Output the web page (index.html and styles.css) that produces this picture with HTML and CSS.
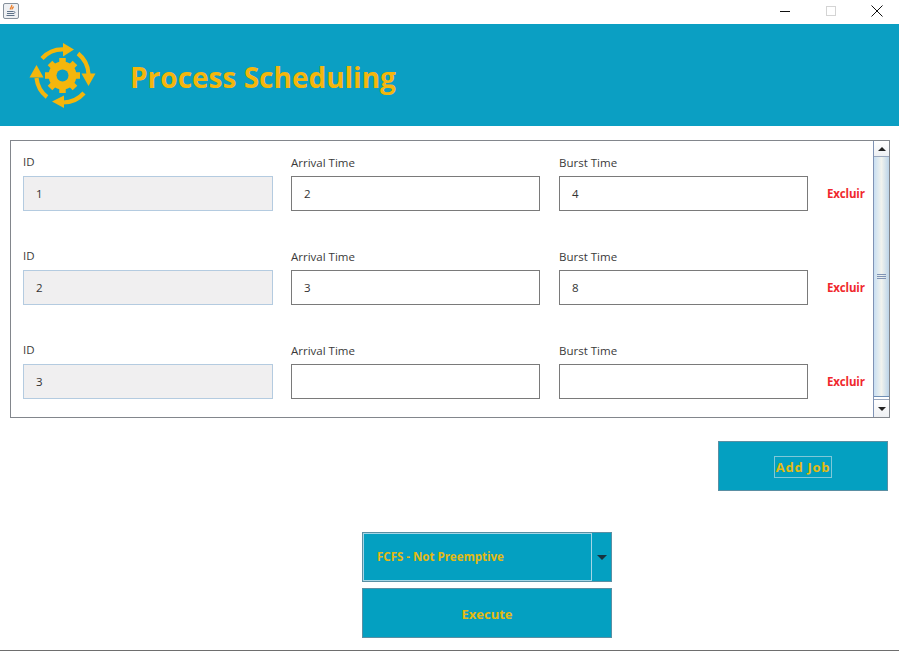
FILE: index.html
```html
<!DOCTYPE html>
<html lang="en">
<head>
  <meta charset="UTF-8" />
  <title>Process Scheduling</title>
  <link rel="stylesheet" href="styles.css">
</head>
<body>
  <div class="titlebar">
    <svg class="app-icon" width="16" height="16" viewBox="0 0 16 16">
      <rect x="0.5" y="0.5" width="15" height="15" rx="1.5" fill="#eef0f3" stroke="#87919c"/>
      <path d="M8.500 2c1.500 1.500-2 2.500-1 4.500M10.200 3.500c.5 1-1.500 1.500-1 3" fill="none" stroke="#ec7f2c" stroke-width="1.400"/>
      <path d="M4 8.500h6.500M4 10.500h7M3.500 12.500h8" fill="none" stroke="#5d7188" stroke-width="1"/>
      <path d="M10.500 8.500c2 0 2 1.500 .2 2" fill="none" stroke="#5d7188" stroke-width="0.800"/>
    </svg>
    <div class="window-btns">
      <svg width="12" height="12" viewBox="0 0 12 12"><path d="M1 6.500h10" stroke="#111" stroke-width="1"/></svg>
      <svg width="12" height="12" viewBox="0 0 12 12"><rect x="1.500" y="1.500" width="9" height="9" fill="none" stroke="#d4d4d4"/></svg>
      <svg width="12" height="12" viewBox="0 0 12 12"><path d="M.5 .5l11 11M11.500 .5l-11 11" stroke="#111" stroke-width="1"/></svg>
    </div>
  </div>

  <div class="header">
    <svg class="logo" width="85" height="80" viewBox="0 0 85 80">
      <g fill="none" stroke="#f4b60c" stroke-width="4.200">
        <path d="M22 23.500A28 28 0 0 1 44 14.500"/>
        <path d="M58 18.500A28 28 0 0 1 68.500 39"/>
        <path d="M64 58A28 28 0 0 1 43 67.500"/>
        <path d="M27 62A28 28 0 0 1 16.500 43"/>
      </g>
      <g fill="#f4b60c">
        <path d="M43 8L54 14.500L43 21.500Z"/>
        <path d="M61.500 38.500H75.500L68.500 51Z"/>
        <path d="M44 60.500V73L32 66.500Z"/>
        <path d="M9.500 42.500H23.500L16.500 30Z"/>
      </g>
      <circle cx="42.500" cy="40.500" r="10" fill="none" stroke="#f4b60c" stroke-width="8"/>
      <g stroke="#f4b60c" stroke-width="6.500">
        <path d="M42.500 23v35M25 40.500h35M30 28l25 25M55 28l-25 25"/>
      </g>
      <circle cx="42.500" cy="40.500" r="6" fill="#0b9fc3"/>
    </svg>
    <h1 class="title">Process Scheduling</h1>
  </div>

  <div class="main">
    <div class="job-panel">
      <div class="job-list">
        <div class="job-row">
          <div class="field"><label class="id-label">ID</label><div class="input readonly">1</div></div>
          <div class="field"><label>Arrival Time</label><div class="input">2</div></div>
          <div class="field"><label>Burst Time</label><div class="input">4</div></div>
          <div class="delete">Excluir</div>
        </div>
        <div class="job-row">
          <div class="field"><label class="id-label">ID</label><div class="input readonly">2</div></div>
          <div class="field"><label>Arrival Time</label><div class="input">3</div></div>
          <div class="field"><label>Burst Time</label><div class="input">8</div></div>
          <div class="delete">Excluir</div>
        </div>
        <div class="job-row">
          <div class="field"><label class="id-label">ID</label><div class="input readonly">3</div></div>
          <div class="field"><label>Arrival Time</label><div class="input"></div></div>
          <div class="field"><label>Burst Time</label><div class="input"></div></div>
          <div class="delete">Excluir</div>
        </div>
      </div>
      <div class="scrollbar">
        <div class="scroll-btn"><span class="arrow-up"></span></div>
        <div class="scroll-thumb"><span class="grip"></span></div>
        <div class="scroll-btn bottom"><span class="arrow-down"></span></div>
      </div>
    </div>

    <div class="add-row">
      <button class="btn add-btn"><span class="focus-text">Add Job</span></button>
    </div>

    <div class="controls">
      <div class="combo">
        <div class="combo-value">FCFS - Not Preemptive</div>
        <div class="combo-arrow"><span class="arrow-down big"></span></div>
      </div>
      <button class="btn execute-btn">Execute</button>
    </div>
  </div>
</body>
</html>
```

FILE: styles.css
```css
* { box-sizing: border-box; margin: 0; padding: 0; }
html, body { height: 651px; overflow: hidden; }
body {
  font-family: 'Open Sans', 'Noto Sans', sans-serif;
  background: #fff;
  color: #333;
  border-bottom: 1px solid #6e6e6e;
}
.titlebar {
  height: 24px;
  display: flex; align-items: flex-start; justify-content: space-between;
  padding: 3px 16px 0 3px;
}
.window-btns { display: flex; gap: 34px; padding-top: 2px; }
.header {
  height: 102px;
  background: #0b9fc3;
  display: flex; align-items: flex-start;
  padding: 11px 0 0 20px;
}
.logo { flex: none; }
.title {
  margin: 23px 0 0 25px;
  font-size: 28px; font-weight: 700;
  line-height: 38px;
  color: #f4b60c;
}
.main { padding: 14px 9px 0 10px; }
.job-panel {
  height: 278px;
  border: 1px solid #82868c;
  display: flex; justify-content: space-between;
}
.job-list { padding: 11px 0 0 12px; }
.job-row {
  height: 94px;
  display: grid;
  grid-template-columns: 268px 268px 268px auto;
}
.field label {
  display: block;
  font-size: 11.500px; line-height: 16px;
  height: 24px; padding-top: 3px;
  color: #3a3a3a;
}
.field .id-label { padding-top: 2px; }
.input {
  width: 249px; height: 35px;
  border: 1px solid #7a7a7a;
  background: #fff;
  font-size: 11.500px; line-height: 33px;
  padding-left: 12px;
}
.input.readonly {
  width: 250px;
  background: #f0eff0;
  border-color: #b4cbe0;
}
.delete {
  font-size: 11.500px; font-weight: 700;
  letter-spacing: -0.150px;
  color: #f0282d;
  line-height: 34px;
  padding-top: 25px;
}
.scrollbar {
  width: 16px;
  display: flex; flex-direction: column;
  border-left: 1px solid #7f93b5;
}
.scroll-btn {
  height: 16px; flex: none;
  background: linear-gradient(#fff, #eef0f3);
  border-bottom: 1px solid #9aa8be;
  display: flex; align-items: center; justify-content: center;
}
.scroll-btn.bottom {
  height: 18px;
  border-bottom: 0; border-top: 1px solid #9aa8be;
}
.scroll-thumb {
  flex: 1;
  background: linear-gradient(90deg, #c9dff2, #f1f3ee 50%, #bcd4e8);
  border-bottom: 1px solid #6f8fb5;
  margin-bottom: 2px;
  display: flex; align-items: center; justify-content: center;
}
.grip {
  width: 9px; height: 5px;
  border-top: 1px solid #7f93b5;
  border-bottom: 1px solid #7f93b5;
  background: linear-gradient(transparent 1px, #7f93b5 1px, #7f93b5 2px, transparent 2px);
}
.arrow-up, .arrow-down {
  width: 0; height: 0;
  border-left: 4px solid transparent;
  border-right: 4px solid transparent;
}
.arrow-up { border-bottom: 4px solid #222; }
.arrow-down { border-top: 4px solid #222; }
.arrow-down.big {
  border-left-width: 5px; border-right-width: 5px;
  border-top: 5px solid #17323f;
}
.add-row { display: flex; justify-content: flex-end; padding: 23px 2px 0 0; }
.btn {
  display: block;
  height: 50px;
  background: #04a0c1;
  border: 1px solid #5a8fa3;
  color: #e4ba12;
  font-family: inherit; font-size: 13px; font-weight: 700;
}
.add-btn { width: 170px; padding-top: 2px; }
.focus-text {
  display: inline-block;
  padding: 1px 1px; line-height: 18px;
  letter-spacing: 0.700px;
  border: 1px solid #7fc8d8;
}
.controls {
  width: 250px;
  margin: 41px 0 0 352px;
  display: flex; flex-direction: column; gap: 6px;
}
.combo {
  height: 50px;
  display: flex;
  background: #04a0c1;
  border: 1px solid #5a8fa3;
}
.combo-value {
  flex: 1;
  border: 1px solid #a5d6e6;
  color: #e4ba12;
  font-size: 11.500px; font-weight: 700;
  line-height: 46px;
  padding-left: 13px;
}
.combo-arrow {
  width: 19px;
  display: flex; align-items: center; justify-content: center;
}
.execute-btn { width: 250px; padding-top: 2px; }
```
